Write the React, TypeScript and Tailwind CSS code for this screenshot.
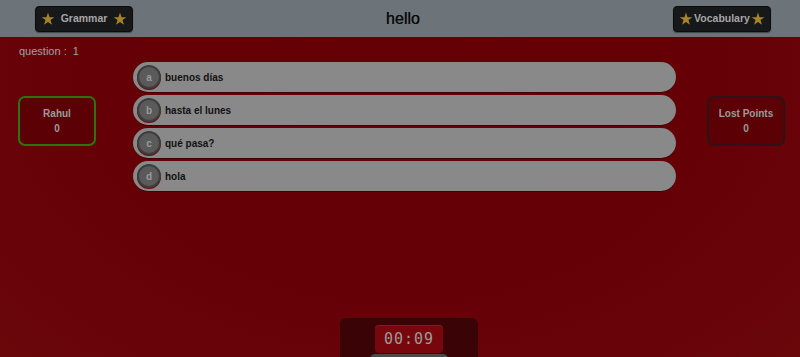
import React from "react";

function Star() {
  return (
    <svg width="14" height="14" viewBox="0 0 24 24" className="shrink-0">
      <path
        d="M12 1l2.6 8 8.4 0-6.8 4.9 2.6 8.1L12 17l-6.8 5 2.6-8.1L1 9h8.4z"
        fill="#a98328"
      />
    </svg>
  );
}

function TopButton({ label }: { label: string }) {
  return (
    <div className="flex h-[26px] w-[98px] items-center justify-between rounded-[4px] border border-[#0c0c0c] bg-[#171819] px-[5px] shadow-[0_1px_1px_rgba(0,0,0,0.4)]">
      <Star />
      <span className="text-[10.5px] font-bold text-[#a6a6a6]">{label}</span>
      <Star />
    </div>
  );
}

const options = [
  { k: "a", t: "buenos días" },
  { k: "b", t: "hasta el lunes" },
  { k: "c", t: "qué pasa?" },
  { k: "d", t: "hola" },
];

export default function App() {
  return (
    <div
      className="flex h-[357px] w-[800px] flex-col overflow-hidden bg-[radial-gradient(ellipse_at_50%_20%,#640005_0%,#660007_55%,#6a070b_100%)]"
      style={{ fontFamily: '"Liberation Sans", Arial, sans-serif' }}
    >
      <header className="grid h-[37px] shrink-0 grid-cols-3 items-center bg-[#6c7379] pl-[35px] pr-[29px]">
        <div className="flex justify-start">
          <TopButton label="Grammar" />
        </div>
        <div className="flex justify-center text-[16px] leading-none text-[#0c0c0c] [text-shadow:0_0_0.4px_#0c0c0c]">hello</div>
        <div className="flex justify-end">
          <TopButton label="Vocabulary" />
        </div>
      </header>

      <main className="flex flex-1 flex-col">
        <div className="pl-[19px] pt-[8px] text-[11px] leading-[12px] text-[#a2a2a2]">question :&nbsp; 1</div>
        <div className="mt-[5px] flex items-start pl-[18px]">
          <div className="mt-[34px] flex h-[50px] w-[78px] flex-col items-center justify-center gap-[5px] rounded-[7px] border-2 border-[#2c7410] bg-[#5b0004] text-[10px] font-bold leading-none text-[#9c9c9c]">
            <span>Rahul</span>
            <span>0</span>
          </div>
          <div className="ml-[37px] flex w-[543px] flex-col gap-[3px]">
            {options.map((o) => (
              <div
                key={o.k}
                className="flex h-[30px] items-center rounded-full bg-[#898989] pl-[4px] shadow-[0_1px_0_rgba(0,0,0,0.35)]"
              >
                <div className="flex h-[24px] w-[24px] items-center justify-center rounded-full border-2 border-[#3e3e3e] bg-[#5a5a5a] text-[10px] font-bold text-[#9a9a9a] shadow-[0_1px_0_#6a0a0a]">
                  {o.k}
                </div>
                <span className="ml-[4px] text-[10px] font-bold text-[#121212]">{o.t}</span>
              </div>
            ))}
          </div>
          <div className="ml-[31px] mt-[34px] flex h-[50px] w-[78px] flex-col items-center justify-center gap-[5px] rounded-[7px] border-2 border-[#2c1414] bg-[#5b0004] text-[10px] font-bold leading-none text-[#9c9c9c]">
            <span>Lost Points</span>
            <span>0</span>
          </div>
        </div>

        <div className="mt-auto ml-[340px] flex h-[39px] w-[138px] shrink-0 flex-col items-center overflow-hidden rounded-t-[6px] bg-[#3a0306] pt-[7px]">
          <div className="flex h-[28px] w-[68px] shrink-0 items-center justify-center rounded-[4px] bg-[#78070d] shadow-[inset_0_1px_0_rgba(255,255,255,0.08)]">
            <span
              className="text-[15px] leading-none tracking-[1px] text-[#9a9a9a]"
              style={{ fontFamily: '"DejaVu Sans Mono", "Liberation Mono", monospace' }}
            >
              00:09
            </span>
          </div>
          <div className="mt-[1px] h-[8px] w-[78px] shrink-0 rounded-t-[5px] bg-[#4a4a4a]" />
        </div>
      </main>
    </div>
  );
}
